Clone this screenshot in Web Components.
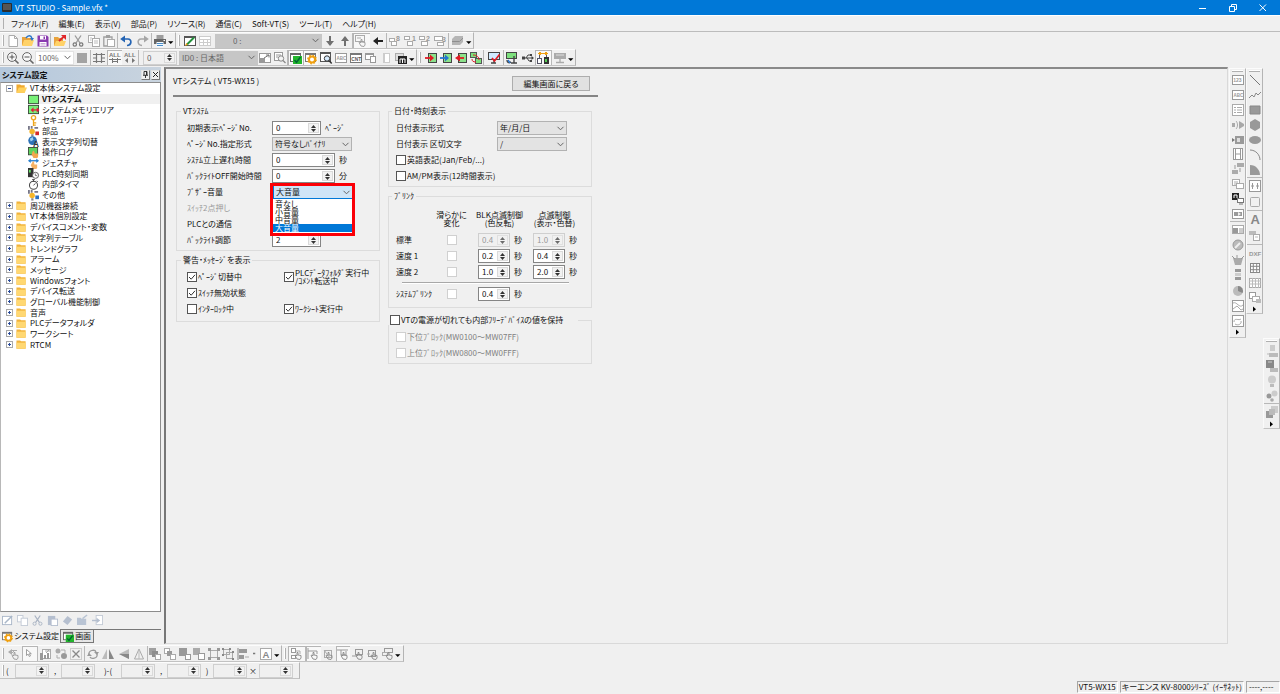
<!DOCTYPE html>
<html lang="ja">
<head>
<meta charset="utf-8">
<title>VT STUDIO - Sample.vfx *</title>
<style>
html,body{margin:0;height:100%}
body{background:#f0f0f0;color:#111;font:8px/10px "Noto Sans CJK JP","Noto Sans",sans-serif;font-feature-settings:"palt";overflow:hidden}
</style>
</head>
<body>
<vt-app></vt-app>
<script>
/* ---------- icon set, 12 x 12 grid ---------- */
const G='#ababab', D='#707070';
const s=(d,c=D,w=1)=>`<path d="${d}" fill="none" stroke="${c}" stroke-width="${w}"/>`;
const f=(d,c=D)=>`<path d="${d}" fill="${c}"/>`;
const win=(x,y,w,h,c=D,fill='#fff')=>`<rect x="${x+.5}" y="${y+.5}" width="${w-1}" height="${h-1}" fill="${fill}" stroke="${c}"/>`;
const t=(x,y,str,sz,c=D)=>`<text x="${x}" y="${y}" font-size="${sz}" font-weight="700" fill="${c}" font-family="Liberation Sans, sans-serif">${str}</text>`;
const hand=(c=G)=>s('M6 11 L4 7.5 L5 7 L6 8 V4.5 H7 V7 L10 7.5 V10 L9 11.5 Z',c,.9);
const cur=(x,y,c=D)=>`<path d="M${x} ${y} v6 l1.6 -1.4 l1.2 2.4 l1.2 -.6 l-1.2 -2.2 h2 z" fill="#fff" stroke="${c}" stroke-width=".8"/>`;
const ICON={
 v:f('M1.5 7 H8.5 L5 10.5 Z','#000'), r:f('M4 2 V9 L8 5.5 Z','#000'),
 dot:f('M4 5h3v2h-3z','#777'),
 new:f('M2 .5H7.5L10.5 3.5V11.5H2Z','#fff')+s('M2 .5H7.5L10.5 3.5V11.5H2Z M7.5 .5V3.5H10.5',G),
 open:f('M0 2H4L5 3H9V10H0Z','#e8a33d')+f('M2 5H12L10 11H0Z','#ffd268')+s('M4 3C6 0 9 0 10 3.5','#2b74c7',1.4)+f('M8 3H12L10 6Z','#2b74c7'),
 save:f('M.5 .5H10L11.5 2V11.5H.5Z','#8a3ab0')+f('M3 1H9V4.5H3ZM2.5 7H9.5V11H2.5Z','#fff')+f('M6.5 1.5H8V4H6.5Z','#8a3ab0')+s('M3.5 8.5H8.5M3.5 10H8.5','#b48ac8',.7),
 openr:f('M0 2H4L5 3H9V11H0Z','#e8a33d')+f('M2 6H12L10 11H0Z','#ffd268')+s('M5 6L10 1.5','#e0262b',1.8)+f('M7 0H12V5Z','#e0262b'),
 cut:s('M3 .5L8 8M9 .5L4 8','#999',1.3)+`<circle cx="2.8" cy="9.5" r="1.7" fill="none" stroke="#777" stroke-width="1.2"/><circle cx="9.2" cy="9.5" r="1.7" fill="none" stroke="#777" stroke-width="1.2"/>`,
 copy:win(0,0,7,8,G)+win(4,3,8,9,G)+s('M6 6H10M6 8H10M2 3H4M2 5H3.5',G,.8),
 paste:s('M3.5 2H.8V11H4M7 2H9V4','#a0a0a0',1.3)+f('M3 0H7V3H3Z','#a0a0a0')+win(4,4,8,8,G),
 undo:s('M2 4H8C12 4 12 10 7 10.5','#2464b4',1.7)+f('M5 .5V7.5L.2 4Z','#2464b4'),
 redo:s('M10 4H4C0 4 0 10 5 10.5','#a6a6a6',1.5)+f('M7 .5V7.5L11.8 4Z','#a6a6a6'),
 print:f('M0 4H12V9H0Z','#666')+f('M2.5 0H9.5V4H2.5Z','#9c9c9c')+f('M2.5 7H9.5V12H2.5Z','#f4faff')+s('M3 8.5H9M3 10.5H9','#4a8dc8')+f('M9.5 5H11V6H9.5Z','#fff'),
 edit:win(0,1,12,10,'#555')+f('M.5 1H11.5V3H.5Z','#555')+s('M2.5 10L10 2.5','#23913b',2)+f('M1 11L2.2 8L4 9.8Z','#f29b1d'),
 table:win(0,1,12,10,'#ccc')+s('M0 4.5H12M0 7.5H12M4.5 4V11M8.5 4V11','#ccc'),
 down:s('M6 1V7',D,2)+f('M2 6H10L6 11Z'), up:s('M6 11V5',D,2)+f('M2 6H10L6 1Z'),
 pick:win(0,0,10,7,G,'none')+s('M2 3H6',G)+hand('#999'), left:s('M5 6H11','#222',2)+f('M6 2V10L1 6Z','#222'),
 w8:win(0,3,6,4,G)+win(2,6,6,5,G)+t(7,6,'8',7,'#999'), w1:win(0,1,6,4,G)+win(3,6,6,5,G)+t(8,6,'1',7,'#999'),
 w2:win(0,1,6,4,G)+win(2,6,7,5,G)+t(7,6,'2',7,'#999'), w3:win(0,1,9,5,G)+win(3,7,7,4,G)+t(8,7,'3',7,'#999'),
 layers:f('M4 1H12V7L9 10H1V4Z','#b5b5b5')+s('M1 6.5H8.5L12 3','#8e8e8e'),
 zin:`<circle cx="5" cy="5" r="4.4" fill="#f8f8f8" stroke="#666"/>`+s('M8.2 8.2L11.5 11.5','#666',1.6)+s('M2.5 5H7.5M5 2.5V7.5','#555'),
 zout:`<circle cx="5" cy="5" r="4.4" fill="#f8f8f8" stroke="#666"/>`+s('M8.2 8.2L11.5 11.5','#666',1.6)+s('M2.5 5H7.5','#555'),
 sq:f('M1 1H11V11H1Z','#a3a3a3'),
 hash:s('M0 2.5H12M0 6H4M8 6H12M0 9.5H12M3.5 1V11M8.5 1V11','#777',1.2),
 all1:t(0,5,'ALL',6,'#777')+s('M0 7.5H12M3 9.5H9M3.5 6V11M8.5 6V11','#777'),
 all2:t(0,5,'ALL',6,'#777')+f('M4 6V11L1 8.5ZM8 6V11L11 8.5Z','#777'),
 jump:win(0,1,12,10,'#999')+f('M1 6H6V10H1Z','#999')+s('M5 6L10 3M7 3H10V5.5','#777'),
 find:win(0,0,9,9,'#999')+s('M2 3H7M2 5H4','#999')+`<circle cx="7" cy="6.5" r="2.7" fill="#f3f3f3" stroke="#888"/>`+s('M9 8.5L11.5 11','#888',1.3),
 chk:win(0,1,11,9,'#666')+f('M0 1H11V3H0Z','#666')+f('M3 4H12V12H3Z','#22b52c')+s('M4.5 8L6.5 10.3L10.5 5','#063',1.5),
 gear:win(0,1,11,9,'#777')+f('M0 1H11V3H0Z','#777')+`<circle cx="7" cy="7.5" r="3" fill="#fff" stroke="#f0a010" stroke-width="2"/><circle cx="7" cy="7.5" r="4.2" fill="none" stroke="#f0a010" stroke-width="1.4" stroke-dasharray="1.6 1.7"/>`,
 wfind:win(0,1,11,9,'#555')+f('M0 0H11V2H0Z','#555')+`<circle cx="7" cy="6.5" r="2.7" fill="#d8ecff" stroke="#333"/>`+s('M9 8.5L11.7 11.5','#333',1.5),
 abc:win(0,1,12,10,'#999')+t(1.5,8,'ABC',4.5,'#999'), cnt:win(0,1,12,10,'#777')+f('M0 1H12V3H0Z','#777')+t(1.3,9,'CNT',4.8,'#555'),
 wcopy:win(0,1,9,7,'#999')+f('M0 1H9V3H0Z','#999')+win(5,4,6,7,'#999'),
 book:win(3,1,7,10,'#ccc')+f('M3 1H5V11H3Z','#ccc'), mm:win(0,1,9,8,'#aaa','#ddd')+f('M3 4H12V12H3Z','#222')+s('M5 11V7H10V11M7.5 7V11','#fff'),
 inr:win(3,1,9,10,'#444','#8be28b')+s('M0 6H5','#e01b24',1.8)+f('M5 2.5V9.5L9 6Z','#e01b24'),
 inb:win(3,1,9,10,'#444','#8be28b')+s('M0 6H5','#2474d0',1.8)+f('M5 2.5V9.5L9 6Z','#2474d0'),
 outr:win(3,1,9,10,'#444','#8be28b')+s('M4 6H9','#e01b24',1.8)+f('M5 2.5V9.5L0 6Z','#e01b24'),
 swap:win(0,0,7,6,'#555','#7de07d')+win(5,6,7,6,'#555','#7de07d')+s('M3 3C7 3 9 5 9 8M2 7C2 9 3 10 6 10','#e01b24'),
 mon:win(0,0,12,8,'#444','#cfeaff')+s('M3 11H8M6 8V11','#444',1.3)+s('M4 6L6.5 9L11.5 2.5','#e01b24',1.7),
 scan:win(0,0,11,7,'#444','#7de07d')+s('M8 4V11M5 11H11M1 8C1 11 3 11 5 10','#444',1.4)+s('M2 8L4 11','#2474d0',1.4),
 usb:s('M1 6H11M4 6L6 3H8M5 6L7 9H9','#444',1)+f('M9.5 4V8L12 6ZM0 4.5H3V7.5H0ZM8 2H10V4H8ZM8 8H10V10H8Z','#444'),
 net:s('M1 1.5H11','#f0a010')+f('M2 0H4V3H2ZM8 0H10V3H8Z','#f0a010')+win(0,6,5,6,'#556','#fff')+f('M7 5H12V12H7Z','#333')+f('M8 7H10V10H8Z','#5c5')+s('M2.5 3V6M9.5 3V5','#556'),
 dev:f('M0 1H12V7H0Z','#aaa')+s('M2 3H10','#ddd')+s('M6 7V10M2 10.5H10','#aaa',1.3),
 nw:s('M3 6L7 2M3 2.5H9',G)+f('M0 4L4 1V7Z',G)+hand('#999'), cursor:cur(3.5,1.5,'#888'),
 chart:win(2,1,9,10,G)+f('M0 5H3V12H0ZM4 7H6V11H4ZM7 5H9V11H7Z','#999')+s('M5 3H10M6 5L9 2',G),
 recol:`<circle cx="3" cy="3" r="2.5" fill="${G}"/><circle cx="9" cy="8" r="3" fill="#999"/>`+s('M6 2H10V5M2 7V10H5',G), del:win(0,0,12,12,'#ccc','none')+s('M2.5 2.5L9.5 9.5M9.5 2.5L2.5 9.5','#888',1.3),
 rot:s('M2 7C1 2 8 1 9 4M10 6C11 11 4 11 3 9','#999',1.3)+f('M7 4H12L10 7ZM0 8H5L2 5Z','#999'), mir:f('M5 1V11H0Z','#bbb')+f('M7 1V11H12Z','#888'), flp:f('M11 1V11L1 6Z','#bbb')+f('M11 6V11L1 6Z','#888'), tri:s('M6 1L1.5 11H10.5Z','#aaa')+s('M6 1V11','#bbb'),
 l1:f('M0 0H7V7H0Z','#a0a0a0')+f('M3 3H9V9H3Z','#8e8e8e')+win(6,6,6,6,'#aaa'), l2:win(0,0,6,6,'#aaa')+f('M3 3H8V8H3Z','#999')+win(6,6,6,6,'#aaa'), l3:f('M0 0H8V8H0Z','#999')+win(6,6,6,6,'#999'), l4:f('M0 0H7V7H0Z','#aaa')+win(5,5,7,7,'#999'),
 grp:win(2,2,8,8,'#aaa','none')+f('M0 0H3V3H0ZM9 0H12V3H9ZM0 9H3V12H0ZM9 9H12V12H9Z','#999'), ugrp:win(1,1,7,6,'#aaa','none')+win(4,4,7,7,'#aaa','none')+f('M0 0H2V2H0ZM7 0H9V2H7ZM0 6H2V8H0ZM10 10H12V12H10ZM10 3H12V5H10Z','#888'),
 align:s('M1 0V12','#888')+f('M2 1H10V5H2ZM2 7H7V11H2Z','#999')+s('M8 9H12','#aaa'), boxA:win(0,0,12,12,'#aaa')+t(2.5,10,'A',9.5,'#888'),
 s1:win(0,0,5,5,'#999')+win(0,7,5,4,'#999')+s('M5 3H9V6',G)+hand('#888'), s2:s('M1 0V11M1 3H10V6','#999')+hand('#888'), s3:win(2,2,8,8,G,'none')+hand('#888')+s('M2 2L8 10',G), s4:s('M0 2H11M4 2V7H9V3','#999')+hand('#888'), s5:win(3,1,8,6,'#999','none')+s('M0 8H5','#999')+hand('#888'), s6:win(1,2,8,7,'#999','none')+s('M0 6H3',G)+hand('#888'), s7:win(2,0,9,5,'#999','none')+win(0,4,6,4,G,'none')+hand('#888'),
 n123:win(0,1,12,10,'#999')+t(1.2,8,'123',5,'#999'), list:win(0,0,12,12,'#aaa')+s('M2 3.5H4M5 3.5H10M2 6H4M5 6H10M2 8.5H4M5 8.5H10','#aaa'),
 snd:f('M0 4H3V8H0Z','#aaa')+s('M4 2C6 4 6 8 4 10','#aaa')+f('M7 2L12 5V7L7 10Z','#a8a8a8'), cam:f('M3 2H12V10H3Z','#999')+f('M0 4L3 6L0 8Z','#777')+f('M5 4H8V8H5Z','#ddd'),
 film:win(1,0,10,12,'#999')+s('M3.5 0V12M8.5 0V12M3.5 6H8.5','#999'), flow:f('M5 0H12V4H5ZM0 7H6V11H0Z','#aaa')+s('M3 2V6M8 5V9','#999'),
 rows:win(0,1,8,7,G)+s('M2 4H6M2 6H5',G)+win(4,5,8,6,'#aaa'), pcb:f('M0 0H7V7H0Z','#222')+s('M2 5V2H5V5','#fff')+win(5,5,7,5,'#777')+s('M7 11H11','#777'), play:win(0,1,12,10,'#999')+f('M2 4H10V8H2Z','#999')+f('M6 4L9 6L6 8Z','#eee'),
 bar:win(0,1,12,9,'#aaa')+f('M1 4H6V9H1Z','#999')+f('M7 4H11V9H7Z','#ccc'), dial:`<circle cx="6" cy="6" r="5" fill="#bbb" stroke="#999"/>`+s('M3 9L8 4','#eee',2), pot:f('M1 4H11L9 11H3Z','#aaa')+s('M0 2L3 5M12 2L9 5M5 1V4','#999'),
 lamp:f('M3 0H9V3H3ZM3 8H9V11H3Z','#999')+f('M3 4H9V7H3Z','#ccc'), pie:`<circle cx="6" cy="6" r="5" fill="#bbb"/>`+f('M6 6V1A5 5 0 0 1 10.5 8Z','#888'), gr1:win(0,0,12,12,'#999')+s('M1 3C5 1 7 9 11 5M1 9L5 6L9 10L11 9','#aaa'), gr2:win(0,0,12,12,'#999')+s('M2 7C2 2 7 6 9 4M3 9C6 11 10 9 9 6','#aaa'),
 line:s('M1 1L11 11','#777'), zig:s('M0 9L3 6L5 8L7 4L9 6L12 3','#888'), rect:f('M1 2H11V10H1Z','#999')+s('M1 2H11V10H1Z','#888'), hex:f('M6 0L11 3V9L6 12L1 9V3Z','#999'), ell:`<ellipse cx="6" cy="6" rx="6" ry="4" fill="#999"/>`, arc:s('M1 1C7 1 11 6 11 11','#888'), quart:f('M1 1C7 1 11 6 11 11H1Z','#999'),
 sw:win(0,0,12,12,'#999')+s('M3.5 3V9M8.5 3V9M2 6H5M7 6H10','#999'), rr:`<rect x="1.5" y="1.5" width="9" height="9" rx="1" fill="none" stroke="#aaa"/>`, bigA:t(1.5,11,'A',13,'#888'), tag:f('M0 1H7V5H0Z','#bbb')+win(4,4,7,7,G)+s('M6 7H9','#bbb'),
 dxf:t(0,8.5,'DXF',6.2,'#999'), g4:win(1,1,10,10,'#888')+s('M4.3 1V11M7.7 1V11M1 4.3H11M1 7.7H11','#888'), g3:win(0,1,12,10,'#aaa')+s('M3.5 1V11M6.5 1V11M9.5 1V11M0 4H12M0 7H12','#bbb'), ov:win(0,0,7,7,'#999')+win(3,4,8,6,'#aaa')+f('M7 7H12V11H7Z','#bbb'),
 c1:f('M4 0H9V6H4Z','#ccc')+f('M3 8H12V12H3Z','#bbb')+s('M1 9H4','#bbb'), c2:f('M0 0H8V8H0Z','#888')+f('M4 8H12V12H4Z','#bbb')+s('M2 2H6','#ccc'), bulb:`<circle cx="6" cy="4.5" r="4" fill="#ccc"/>`+f('M4 9H8V12H4Z','#bbb'), scr:`<circle cx="8.5" cy="3.5" r="3" fill="#ccc"/><circle cx="3" cy="6" r="2.5" fill="#999"/><circle cx="6" cy="10" r="1.8" fill="#aaa"/>`, lay:f('M5 0H12V7H5Z','#ccc')+f('M0 5H3V9H7V12H0Z','#999')+f('M3 3H9V9H3Z','#bbb'),
 folder:f('M.5 1.5H4.5L5.5 2.5H10.5V10.5H.5Z','#f2b33a')+f('M.5 4H10.5V10.5H.5Z','#ffd873'), folderopen:f('M.5 1.5H4.5L5.5 2.5H9.5V10.5H.5Z','#efa92f')+f('M3 5H12L9.5 10.5H.5Z','#ffd15c'),
 screen:win(0,1,12,10,'#3a4a3a','#78f078'), mem:win(0,1,12,10,'#3a4a3a','#78f078')+s('M4 6.5H11','#e01b3a',1.4)+f('M6 3.5V9.5L3 6.5ZM9.5 3.5V9.5L12.5 6.5Z','#e01b3a'),
 key:`<circle cx="6" cy="3" r="2.3" fill="none" stroke="#eea61c" stroke-width="1.5"/>`+s('M6 5V12M6 8.5H9M6 11H8.5','#eea61c',1.4),
 parts:f('M0 0H2V4H0ZM3 0H5V3H3ZM7 1H11V3H7Z','#778')+`<circle cx="4.5" cy="6" r="3" fill="#f5b52a"/>`+f('M3.5 9H6V11.5H3.5Z','#888')+f('M8 6H12V10H8Z','#d42a2a'), other:f('M0 0H2V4H0ZM3 0H5V3H3ZM7 1H11V3H7Z','#778')+`<circle cx="4.5" cy="6" r="3" fill="#f5b52a"/>`+f('M3.5 9H6V11.5H3.5Z','#888')+f('M8 6H12V10H8Z','#2a6fc4'),
 lang:`<circle cx="5" cy="5" r="4.7" fill="#2d72b8"/>`+f('M2 3L5 1L6 4L3 6Z','#9fd0f0')+t(5.5,12,'A',9,'#333'), log:win(0,0,11,9,'#3a4a3a','#5fd35f')+f('M5 5L6.5 4L7.5 7H11V11L10 12H6L4 8.5Z','#f3a64e'),
 gest:s('M1 3H11','#2a80d0',1.5)+f('M0 3L3 .5V5.5ZM12 3L9 .5V5.5Z','#2a80d0')+f('M5 4L6.5 3.5L7 7H10V11L9 12H5L3 8Z','#f5b266'), plc:f('M0 0H6V10H0Z','#333')+f('M1 2H3V5H1Z','#6d6')+`<circle cx="8.2" cy="8" r="3.3" fill="#fff" stroke="#555"/>`+s('M8 6V8.3H10','#555',.8),
 timer:`<circle cx="6" cy="6.8" r="4.4" fill="#fff" stroke="#444" stroke-width="1.1"/>`+s('M4.5 .6H7.5M6 1V3M9.5 2L10.7 3.2M6 7L8 4.8','#444'),
 pe:win(0,1,11,10,'#a9b7c8')+s('M3 9L11 1','#a9b7c8',1.6), pc:win(0,0,7,8,'#c4cbd6')+win(4,3,8,9,'#c4cbd6'), pcut:s('M3 .5L8 8M9 .5L4 8','#a9b3c3',1.3)+`<circle cx="2.8" cy="9.5" r="1.7" fill="none" stroke="#a9b3c3"/><circle cx="9.2" cy="9.5" r="1.7" fill="none" stroke="#a9b3c3"/>`,
 pp:f('M1 1H9V11H1Z','#b5bfcf')+win(4,4,8,8,'#b5bfcf'), pd:f('M6 1L11 5L6 11L1 7Z','#b5bfcf'), po:f('M0 3H4L5 4H10V11H0Z','#b9c4d4')+s('M6 4L11 0','#b9c4d4',1.6), pi:win(4,0,8,11,'#c4cbd6')+s('M0 6H6','#b5bfcf',1.5)+f('M5 3V9L9 6Z','#b5bfcf')
};
const svg=(n,z=12)=>`<svg viewBox="0 0 12 12" width="${z}" height="${z}" aria-hidden="true">${ICON[n]||''}</svg>`;
const BASE=`*{box-sizing:border-box}svg{display:block;flex:none;overflow:visible}button,input,select{font:inherit;color:inherit;font-feature-settings:inherit;margin:0;padding:0;border-radius:0;line-height:10px}button{background:none;border:0}`;
const define=(name,render)=>customElements.define(name,class extends HTMLElement{
  constructor(){super();this.attachShadow({mode:'open'})}
  connectedCallback(){this.shadowRoot.innerHTML=render(this)}
});
const at=(e,n,d='')=>e.getAttribute(n)??d;

/* ---------- toolbars ---------- */
define('tool-bar',()=>`<style>${BASE}
:host{display:flex;position:relative;height:17px;flex:none;padding-left:6px;border-right:1px solid #b4b4b4;border-bottom:1px solid #c2c2c2;border-top:1px solid #fcfcfc;align-items:center;box-sizing:border-box}
:host::before{content:"";position:absolute;left:2px;top:2px;bottom:2px;border-left:1px solid #fff;border-right:1px solid #b0b0b0}
:host([vertical]){flex-direction:column;width:17px;height:auto;padding:4px 0 0;border-left:1px solid #fafafa}
:host([vertical])::before{left:2px;right:2px;top:1px;bottom:auto;border:0;border-top:1px solid #fff;border-bottom:1px solid #b0b0b0}
</style><slot></slot>`);
define('tool-group',e=>{
  const v=e.hasAttribute('vertical'), n=at(e,'size');
  return `<style>${BASE}
:host{display:flex;flex:none;box-sizing:border-box;${v?`flex-direction:column;width:15px;height:${n}px`:`width:${n}px;height:15px`}}
:host([sep]){${v?'border-top':'border-left'}:1px solid #b8b8b8}
button{flex:1 1 0;min-width:0;min-height:0;display:flex;align-items:center;justify-content:center}
button.n{flex:0 0 8px}
button.p{background:#f8f8f8;box-shadow:inset 1px 1px #b5b5b5}
</style>${at(e,'icons').split(' ').filter(Boolean).map(k=>{const p=k[0]=='+',i=p?k.slice(1):k,n=/^(v|r|dot)$/.test(i);
  return `<button type="button" aria-label="${i}" class="${p?'p':''} ${n?'n':''}">${svg(i,n?9:12)}</button>`}).join('')}`});

/* ---------- form controls ---------- */
const LABEL=`:host{display:flex;align-items:center;height:16px;white-space:nowrap;flex:none}label{flex:none}:host([off]) label{color:#9b9b9b}`;
const cap=e=>e.hasAttribute('caption')?`<label for="c" style="width:${at(e,'lead','85')}px">${at(e,'caption')}</label>`:'';
const aria=e=>e.hasAttribute('caption')?'':`aria-label="${at(e,'name')}"`;
define('ui-spin',e=>`<style>${BASE}${LABEL}
.b{display:flex;height:14px;border:1px solid #858585;background:#fff;width:${at(e,'w')}px;padding:1px}
input{flex:1;min-width:0;width:0;border:0;background:none;padding:0 2px;outline:0}
.s{display:grid;grid-template-rows:1fr 1fr;width:11px;background:#f2f2f2;border:1px solid #dadada}
.s button{display:flex;align-items:center;justify-content:center;overflow:hidden;min-height:0}
:host([off]) .b,:host([flat]) .b{border-color:#cfcfcf;background:#f0f0f0}:host([off]) input{color:#999}
:host([flat]) input{color:#666}
:host([off]) .s{opacity:.7}
.u{margin-left:4px}</style>
${cap(e)}<div class="b"><input id="c" ${aria(e)} value="${at(e,'value')}" ${e.hasAttribute('off')?'disabled':''}><div class="s"><button type="button" tabindex="-1" aria-label="up"><svg width="5" height="3" viewBox="0 0 5 3"><path d="M0 3L2.5 0L5 3Z" fill="#333"/></svg></button><button type="button" tabindex="-1" aria-label="down"><svg width="5" height="3" viewBox="0 0 5 3"><path d="M0 0L2.5 3L5 0Z" fill="#333"/></svg></button></div></div>${e.hasAttribute('unit')?`<span class="u">${at(e,'unit')}</span>`:''}`);
define('ui-select',e=>`<style>${BASE}${LABEL}
.b{display:grid;align-items:center;width:${at(e,'w')}px}
select{grid-area:1/1;appearance:none;height:14px;width:100%;border:1px solid #b2b2b2;background:#e3e3e3;padding:0 10px 0 2px;outline:0}
svg{grid-area:1/1;justify-self:end;margin-right:3px;pointer-events:none}
:host([white]) select{background:#fff;border-color:#e2e2e2;color:#666}
:host([gray]) select{background:#c6c6c6;border-color:#c6c6c6;color:#666}
:host([num]) select{padding-left:17px}
:host([hot]) select{background:#cfe5f7;border-color:#0078d7}
</style>${cap(e)}<div class="b"><select id="c" ${aria(e)}><option>${at(e,'value')}</option></select><svg width="7" height="5" viewBox="0 0 7 5"><path d="M.5 .8L3.5 3.8L6.5 .8" fill="none" stroke="#666"/></svg></div>`);
define('ui-check',e=>`<style>${BASE}
:host{display:flex;align-items:center;height:16px;white-space:nowrap;flex:none}
label{display:flex;align-items:center;gap:1px;line-height:8px}
.k{display:grid}
input{grid-area:1/1;appearance:none;width:10px;height:10px;border:1px solid #555;background:#fff}
svg{grid-area:1/1;pointer-events:none;display:none}input:checked+svg{display:block}
:host([off]) input{border-color:#d0d0d0}:host([off]) label{color:#808080}
</style><label><span class="k"><input type="checkbox" aria-label="${at(e,'name')||e.textContent.trim()}" ${e.hasAttribute('checked')?'checked':''} ${e.hasAttribute('off')?'disabled':''}><svg width="10" height="10" viewBox="0 0 10 10"><path d="M2 5L4.2 7.2L8 2.8" fill="none" stroke="#333"/></svg></span><span><slot></slot></span></label>`);
define('form-group',e=>`<style>${BASE}
:host{display:block;min-width:0}
fieldset{margin:0;min-width:0;border:1px solid #dcdcdc;padding:4px 7px ${at(e,'pad','2')}px 10px}
legend{padding:0 2px;margin-left:-6px;line-height:10px;height:10px;display:flex;align-items:center}
:host([tight]) fieldset{padding-left:7px}:host([tight]) legend{margin-left:-4px}
:host([check]) legend{margin-left:-8px;padding-right:15px}
</style><fieldset><legend>${e.hasAttribute('legend')?at(e,'legend'):'<slot name="legend"></slot>'}</legend><slot></slot></fieldset>`);

/* ---------- volume drop-down with its open list ---------- */
define('volume-picker',()=>`<style>${BASE}
:host{display:block;position:relative;height:16px}
.mark{position:absolute;left:83px;top:-1px;width:85px;height:53px;border:3px solid #fb0007;z-index:3;pointer-events:none}
ul{position:absolute;z-index:2;left:86px;top:15px;width:79px;height:34px;margin:0;padding:1px 0 0;list-style:none;background:#fff;line-height:8px}
li{padding-left:2px;height:8px}.on{background:#0078d7;color:#fff}
</style><ui-select caption="ﾌﾞｻﾞｰ音量" lead="86" w="80" value="大音量" hot></ui-select>
<ul role="listbox" aria-label="ﾌﾞｻﾞｰ音量"><li role="option">音なし</li><li role="option">小音量</li><li role="option">中音量</li><li role="option" class="on" aria-selected="true">大音量</li></ul><div class="mark"></div>`);

/* ---------- blink settings ---------- */
define('blink-table',()=>{
  const row=(n,a,b,off='')=>`<tr><th scope="row">${n}</th><td class="c"><ui-check off name="${n}"></ui-check></td><td><ui-spin w="32" value="${a}" unit="秒" name="${n}" ${off}></ui-spin></td><td>${b?`<ui-spin w="32" value="${b}" unit="秒" name="${n}" ${off}></ui-spin>`:''}</td></tr>`;
  return `<style>${BASE}
:host{display:block;padding-top:6px}
table{border-collapse:collapse;table-layout:fixed;width:186px}
td,th{padding:0;font-weight:400;text-align:left;height:16px;white-space:nowrap}
col.a{width:38px}col.b{width:44px}col.d{width:55px}col.e{width:49px}
thead th{line-height:8px;text-align:center;height:21px;vertical-align:top}
thead th span{display:block}
thead th:nth-child(2){padding-right:9px}thead th:nth-child(3) span{margin-left:-12px}thead th:nth-child(4) span{margin-left:-6px}
.c ui-check{padding-left:13px}
.h td{height:6px;padding-left:6px}hr{margin:0 13px 0 0;border:0;border-top:1px solid #a8a8a8;border-bottom:1px solid #fff}
</style><table><colgroup><col class="a"><col class="b"><col class="d"><col class="e"></colgroup>
<thead><tr><th></th><th>滑らかに<br>変化</th><th><span>BLK点滅制御<br>(色反転)</span></th><th><span>点滅制御<br>(表示・色替)</span></th></tr></thead>
<tbody>${row('標準','0.4','1.0','off')}${row('速度 1','0.2','0.4')}${row('速度 2','1.0','2.0')}<tr class="h"><td colspan="4"><hr></td></tr>${row('ｼｽﾃﾑﾌﾞﾘﾝｸ','0.4','')}</tbody></table>`});

define('settings-form',()=>`<style>${BASE}
:host{display:block;width:432px;padding:7px 0 0 7px}
header{display:flex;align-items:flex-start;justify-content:space-between;padding:0 8px 4px 0;border-bottom:2px solid #858585}
h1{font-size:8px;font-weight:400;margin:0}
header button{width:78px;height:15px;border:1px solid #adadad;background:#e1e1e1}
.cols{display:grid;grid-template-columns:204px 204px;gap:8px;padding:9px 0 0 3px;align-items:start}
.col{display:grid;grid-template-columns:minmax(0,1fr);gap:4px}
.two{display:grid;grid-template-columns:97px 1fr}
.last{margin-top:3px}
</style><header><h1>VTシステム ( VT5-WX15 )</h1><button type="button">編集画面に戻る</button></header>
<div class="cols"><div class="col">
<form-group legend="VTｼｽﾃﾑ">
<ui-spin caption="初期表示ﾍﾟｰｼﾞNo." w="49" value="0" unit="ﾍﾟｰｼﾞ"></ui-spin>
<ui-select caption="ﾍﾟｰｼﾞNo.指定形式" w="80" value="符号なしﾊﾞｲﾅﾘ"></ui-select>
<ui-spin caption="ｼｽﾃﾑ立上遅れ時間" w="63" value="0" unit="秒"></ui-spin>
<ui-spin caption="ﾊﾞｯｸﾗｲﾄOFF開始時間" w="63" value="0" unit="分"></ui-spin>
<volume-picker></volume-picker>
<ui-select off caption="ｽｲｯﾁ2点押し" w="80" value=""></ui-select>
<ui-select caption="PLCとの通信" w="80" value=""></ui-select>
<ui-spin caption="ﾊﾞｯｸﾗｲﾄ調節" w="49" value="2"></ui-spin>
</form-group>
<form-group legend="警告・ﾒｯｾｰｼﾞを表示" pad="4"><div class="two">
<ui-check checked>ﾍﾟｰｼﾞ切替中</ui-check><ui-check checked>PLCﾃﾞｰﾀﾌｫﾙﾀﾞ実行中<br>/ｺﾒﾝﾄ転送中</ui-check>
<ui-check checked>ｽｲｯﾁ無効状態</ui-check><span></span>
<ui-check>ｲﾝﾀｰﾛｯｸ中</ui-check><ui-check checked>ﾜｰｸｼｰﾄ実行中</ui-check></div></form-group>
</div><div class="col">
<form-group tight legend="日付・時刻表示">
<ui-select caption="日付表示形式" lead="101" w="70" value="年/月/日"></ui-select>
<ui-select caption="日付表示 区切文字" lead="101" w="70" value="/"></ui-select>
<ui-check>英語表記(Jan/Feb/...)</ui-check><ui-check>AM/PM表示(12時間表示)</ui-check></form-group>
<form-group tight legend="ﾌﾞﾘﾝｸ" pad="5"><blink-table></blink-table></form-group>
<form-group tight check class="last"><ui-check slot="legend">VTの電源が切れても内部ﾌﾘｰﾃﾞﾊﾞｲｽの値を保持</ui-check>
<ui-check off>下位ﾌﾞﾛｯｸ(MW0100～MW07FF)</ui-check><ui-check off>上位ﾌﾞﾛｯｸ(MW0800～MW0FFF)</ui-check></form-group>
</div></div>`);

/* ---------- project tree ---------- */
define('project-tree',()=>{
  const kids=[['screen','VTシステム',1],['mem','システムメモリエリア'],['key','セキュリティ'],['parts','部品'],['lang','表示文字列切替'],['log','操作ログ'],['gest','ジェスチャ'],['plc','PLC時刻同期'],['timer','内部タイマ'],['other','その他']];
  const tops='周辺機器接続,VT本体個別設定,デバイスコメント・変数,文字列テーブル,トレンドグラフ,アラーム,メッセージ,Windowsフォント,デバイス転送,グローバル機能制御,音声,PLCデータフォルダ,ワークシート,RTCM'.split(',');
  const box=p=>`<svg width="7" height="7" viewBox="0 0 7 7"><rect x=".5" y=".5" width="6" height="6" fill="#fff" stroke="#a9a9a9"/><path d="M2 3.5H5${p?'M3.5 2V5':''}" stroke="#2b4c9b"/></svg>`;
  const top=(n,i,p)=>`<li role="treeitem" aria-level="1" aria-expanded="${!p}">${box(p)}${svg(i,11)}<span>${n}</span></li>`;
  return `<style>${BASE}
:host{display:block;flex:1;min-height:0;background:#fff;border:1px solid #8c8c8c;border-left-color:#b8b8b8;overflow:hidden}
ul{list-style:none;margin:0;padding:0 0 0 5px;display:grid;grid-auto-rows:1fr;height:267px}
li{display:flex;align-items:center;gap:3px;min-height:0}li span{white-space:nowrap}
.k{margin-left:22px;gap:3px}.on{background:#f0f0f0;font-weight:700}
</style><ul role="tree">${top('VT本体システム設定','folderopen',0)}${kids.map(k=>`<li role="treeitem" aria-level="2" class="k ${k[2]?'on':''}">${svg(k[0],11)}<span>${k[1]}</span></li>`).join('')}${tops.map(n=>top(n,'folder',1)).join('')}</ul>`});

define('side-panel',()=>`<style>${BASE}
:host{display:flex;flex-direction:column;width:161px;flex:none;margin-right:3px}
header{display:flex;align-items:center;gap:1px;height:15px;padding:0 1px 0 2px;background:linear-gradient(90deg,#b5c8dc,#c9d4df);flex:none}
h2{font-size:8px;margin:0;flex:1}
header button{width:9px;height:10px;background:#f0f0f0;border:1px solid #e2e2e2;border-right-color:#777;border-bottom-color:#777;display:flex;align-items:center;justify-content:center}
.t{display:flex;gap:3px;padding:0 2px;height:17px;align-items:center;flex:none}
.t button{width:12px}
nav{display:flex;height:15px;flex:none;padding-bottom:1px}
nav button{display:flex;align-items:center;gap:1px;padding:0 2px;border:1px solid #777;border-width:1px 1px 1px 0}
nav .on{border-width:0 1px 0 0;padding-right:1px}nav .o{background:#e6e6e6}
nav i{flex:1;border-top:1px solid #777}
</style><header><h2>システム設定</h2><button type="button" aria-label="pin"><svg width="7" height="7" viewBox="0 0 7 7"><path d="M2 .5H5V4M2 .5V4M4.5 .5V4M1 4.3H6M3.5 4V7" fill="none" stroke="#222" stroke-width=".9"/></svg></button><button type="button" aria-label="close"><svg width="7" height="7" viewBox="0 0 7 7"><path d="M1 1L6 6M6 1L1 6" stroke="#222"/></svg></button></header>
<project-tree></project-tree>
<div class="t">${['pe','pc','pcut','pp','pd','po','pi'].map(i=>`<button type="button" aria-label="${i}">${svg(i,11)}</button>`).join('')}</div>
<nav><button type="button" class="on">${svg('gear',11)}システム設定</button><button type="button" class="o">${svg('chk',11)}画面</button><i></i></nav>`);

/* ---------- window frame ---------- */
define('title-bar',()=>`<style>${BASE}
:host{display:flex;align-items:center;height:15px;background:#0078d7;color:#fff;padding:0 2px;flex:none}
span{flex:1;padding-left:3px}button{width:30px;height:15px;display:flex;align-items:center;justify-content:center}
</style><svg width="10" height="9" viewBox="0 0 10 9"><rect width="10" height="9" rx="1" fill="#2c2c2c"/><rect x="1" y="1" width="8" height="6" fill="#555"/></svg><span>VT STUDIO - Sample.vfx *</span>
<button type="button" aria-label="minimize"><svg width="8" height="8"><path d="M0 4.5H7" stroke="#fff"/></svg></button><button type="button" aria-label="restore"><svg width="8" height="8"><path d="M.5 2.5H5.5V7.5H.5ZM2.5 2.5V.5H7.5V5.5H5.5" fill="none" stroke="#fff"/></svg></button><button type="button" aria-label="close"><svg width="8" height="8"><path d="M.5 .5L7 7M7 .5L.5 7" stroke="#fff"/></svg></button>`);
define('menu-bar',()=>`<style>${BASE}
:host{display:flex;align-items:center;gap:10px;height:17px;padding-left:11px;border-top:1px solid #fff;border-bottom:1px solid #bcbcbc;flex:none;box-sizing:border-box;position:relative}
:host::before{content:"";position:absolute;left:3px;top:2px;bottom:2px;border-right:1px solid #b0b0b0}
</style>${['ファイル(F)','編集(E)','表示(V)','部品(P)','リソース(R)','通信(C)','Soft-VT(S)','ツール(T)','ヘルプ(H)'].map(m=>`<button type="button">${m}</button>`).join('')}`);
define('status-bar',()=>`<style>${BASE}
:host{display:flex;justify-content:flex-end;gap:2px;flex:none;height:12px;margin:2px 0 1px}
span{flex:none;border:1px solid #a6a6a6;border-right-color:#fff;border-bottom-color:#fff;padding:0 1px;white-space:nowrap}
.m{min-width:41px}.p{min-width:113px}.x{min-width:34px;padding-left:2px}
</style><span class="m">VT5-WX15</span><span class="p">キーエンス KV-8000ｼﾘｰｽﾞ (ｲｰｻﾈｯﾄ)</span><span class="x">----,----</span>`);
const g=(size,icons,sep=1)=>`<tool-group size="${size}" icons="${icons}" ${sep?'sep':''}></tool-group>`;
const vg=(size,icons,sep=1)=>`<tool-group vertical size="${size}" icons="${icons}" ${sep?'sep':''}></tool-group>`;
const sp=n=>`<ui-spin flat w="34" value="" name="${n}"></ui-spin>`;
define('vt-app',()=>`<style>${BASE}
:host{display:flex;flex-direction:column;height:100vh;overflow:hidden}
.r{display:flex;flex:none}
.main{display:flex;flex:1;min-height:0;margin:1px 0}
.work{flex:1;min-width:0;border:1px solid #d9d9d9;border-left:2px solid #777;border-top:2px solid #8a8a8a;overflow:hidden}
.tools{display:grid;grid-template-columns:17px 17px 17px;grid-template-rows:auto auto;align-content:start;align-items:start;padding:1px 0 0 1px}
.c3{grid-column:3;grid-row:2}
.gap{margin-left:2px}.sp{margin:0 2px 0 4px}
.xy{color:#222;padding-right:6px}.xy span{width:12px;text-align:center}.xy .w{width:26px}.xy .s{width:9px;text-align:left}
</style><title-bar></title-bar><menu-bar></menu-bar>
<div class="r"><tool-bar>${g(44,'new open save',0)}${g(19,'openr')}${g(48,'cut copy paste')}${g(34,'undo redo')}${g(24,'print v')}</tool-bar>
<tool-bar>${g(31,'edit table',0)}<ui-select class="gap" gray num w="107" value="0  :" name="画面"></ui-select>${g(30,'down up',0)}${g(34,'+pick left')}${g(62,'w8 w1 w2 w3')}${g(25,'layers v')}</tool-bar></div>
<div class="r"><tool-bar>${g(29,'zin zout',0)}<ui-select white w="39" value="100%" name="表示倍率"></ui-select>${g(16,'sq',0)}${g(48,'hash +all1 all2')}${g(1,'',1)}<ui-spin class="sp" flat w="34" value="0" name="番号"></ui-spin><ui-select gray w="79" value="ID0 : 日本語" name="言語"></ui-select>${g(29,'jump find',0)}${g(129,'+chk +gear wfind abc cnt wcopy book mm v')}</tool-bar>
<tool-bar>${g(60,'inr inb outr swap',0)}${g(20,'mon')}${g(48,'scan usb +net')}${g(24,'dev v')}</tool-bar></div>
<div class="main"><side-panel></side-panel><div class="work"><settings-form></settings-form></div>
<div class="tools"><tool-bar vertical>${vg(148,'n123 abc list snd cam film flow rows pcb play',0)}${vg(116,'bar dial pot lamp pie gr1 gr2 r')}</tool-bar>
<tool-bar vertical>${vg(104,'line zig rect hex ell arc quart',0)}${vg(33,'sw rr')}${vg(34,'bigA tag')}${vg(69,'dxf g4 g3 ov r')}</tool-bar>
<tool-bar vertical class="c3">${vg(60,'c1 c2 bulb scr',0)}${vg(25,'lay r')}</tool-bar></div></div>
<div class="r"><tool-bar>${g(31,'nw +cursor',0)}${g(47,'chart recol del')}${g(63,'rot mir flp tri')}${g(134,'l1 l2 l3 l4 grp ugrp align dot boxA v')}</tool-bar>
<tool-bar>${g(17,'+s1',0)}${g(98,'+s2 s3 +s4 s5 s6 s7 v')}</tool-bar></div>
<div class="r"><tool-bar class="xy"><span class="s">(</span>${sp('X1')}<span>,</span>${sp('Y1')}<span class="w">)-(</span>${sp('X2')}<span>,</span>${sp('Y2')}<span>)</span>${sp('W')}<span>×</span>${sp('H')}</tool-bar></div>
<status-bar></status-bar>`);
</script>
</body>
</html>
